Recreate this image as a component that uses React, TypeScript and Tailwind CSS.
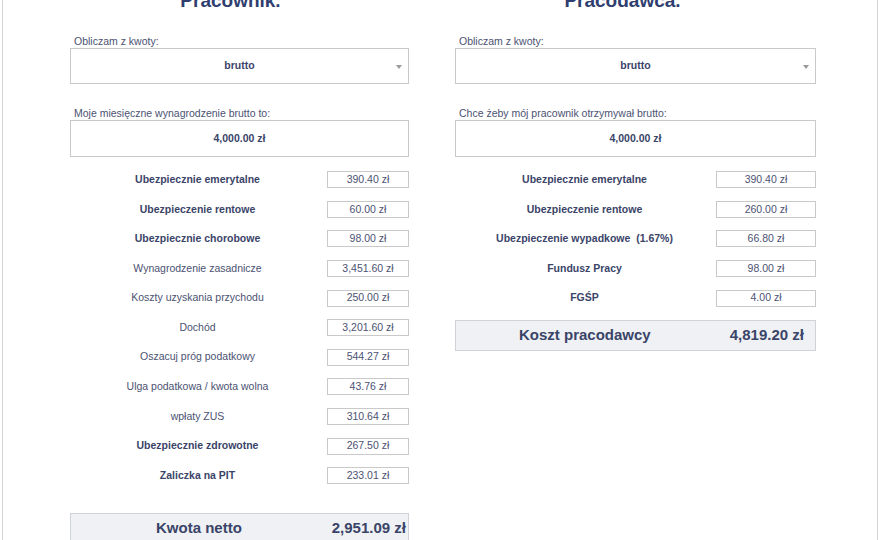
const font = { fontFamily: '"Liberation Sans", Arial, sans-serif' }

type Row = { label: string; value: string; bold?: boolean }

const employeeRows: Row[] = [
  { label: 'Ubezpiecznie emerytalne', value: '390.40 zł', bold: true },
  { label: 'Ubezpieczenie rentowe', value: '60.00 zł', bold: true },
  { label: 'Ubezpiecznie chorobowe', value: '98.00 zł', bold: true },
  { label: 'Wynagrodzenie zasadnicze', value: '3,451.60 zł' },
  { label: 'Koszty uzyskania przychodu', value: '250.00 zł' },
  { label: 'Dochód', value: '3,201.60 zł' },
  { label: 'Oszacuj próg podatkowy', value: '544.27 zł' },
  { label: 'Ulga podatkowa / kwota wolna', value: '43.76 zł' },
  { label: 'wpłaty ZUS', value: '310.64 zł' },
  { label: 'Ubezpiecznie zdrowotne', value: '267.50 zł', bold: true },
  { label: 'Zaliczka na PIT', value: '233.01 zł', bold: true },
]

const employerRows: Row[] = [
  { label: 'Ubezpiecznie emerytalne', value: '390.40 zł', bold: true },
  { label: 'Ubezpieczenie rentowe', value: '260.00 zł', bold: true },
  { label: 'Ubezpieczenie wypadkowe  (1.67%)', value: '66.80 zł', bold: true },
  { label: 'Fundusz Pracy', value: '98.00 zł', bold: true },
  { label: 'FGŚP', value: '4.00 zł', bold: true },
]

function SelectBox() {
  return (
    <div className="relative h-[36px] border border-[#c9c9c9] bg-white flex items-center justify-center">
      <span className="text-[10.5px] font-bold text-[#3a4468]">brutto</span>
      <span className="absolute right-[6px] top-[16px] w-0 h-0 border-l-[3px] border-r-[3px] border-t-[4px] border-l-transparent border-r-transparent border-t-[#9a9a9a]" />
    </div>
  )
}

function Rows({ rows, valueWidth }: { rows: Row[]; valueWidth: string }) {
  return (
    <div className="flex flex-col">
      {rows.map((r) => (
        <div key={r.label} className="h-[29.6px] flex items-center">
          <div
            className={`flex-1 text-center text-[10.5px] whitespace-pre ${
              r.bold ? 'font-bold text-[#3a4468]' : 'text-[#4b5272]'
            }`}
          >
            {r.label}
          </div>
          <div
            className={`${valueWidth} h-[17px] ml-[2px] border border-[#c9c9c9] bg-white flex items-center justify-center text-[10.5px] text-[#4b5272]`}
          >
            {r.value}
          </div>
        </div>
      ))}
    </div>
  )
}

function Column({
  title,
  titlePad,
  amountLabel,
  rows,
  valueWidth,
  summaryLabel,
  summaryValue,
  summaryGap,
  summaryLabelPad,
  summaryValuePad,
  width,
}: {
  title: string
  titlePad: string
  amountLabel: string
  rows: Row[]
  valueWidth: string
  summaryLabel: string
  summaryValue: string
  summaryGap: string
  summaryLabelPad: string
  summaryValuePad: string
  width: string
}) {
  return (
    <div className={`${width} self-start flex flex-col`}>
      <h1
        className={`mt-[-12px] h-[26px] leading-[26px] text-center text-[19px] font-bold text-[#2f3e6e] ${titlePad}`}
      >
        {title}
      </h1>
      <p className="mt-[20px] pl-[4px] h-[14px] leading-[14px] text-[10.5px] text-[#4b5272]">Obliczam z kwoty:</p>
      <SelectBox />
      <p className="mt-[22px] pl-[4px] h-[14px] leading-[14px] text-[10.5px] text-[#4b5272]">{amountLabel}</p>
      <div className="h-[37px] border border-[#c9c9c9] bg-white flex items-center justify-center">
        <span className="text-[10.5px] font-bold text-[#3a4468]">4,000.00 zł</span>
      </div>
      <div className="mt-[8px]">
        <Rows rows={rows} valueWidth={valueWidth} />
      </div>
      <div
        className={`${summaryGap} h-[31px] border border-[#cfd2d6] bg-[#eff1f4] flex items-center text-[15px] font-bold text-[#3a4468]`}
      >
        <span className={summaryLabelPad}>{summaryLabel}</span>
        <span className={`ml-auto ${summaryValuePad}`}>{summaryValue}</span>
      </div>
    </div>
  )
}

export default function App() {
  return (
    <div style={font} className="w-[880px] h-[540px] overflow-hidden bg-white">
      <div className="ml-[2px] w-[876px] h-[540px] border-l border-r border-[#d4d4d4] flex pl-[67px]">
        <Column
          title="Pracownik."
          titlePad="pr-[18px]"
          amountLabel="Moje miesięczne wynagrodzenie brutto to:"
          rows={employeeRows}
          valueWidth="w-[82px]"
          summaryLabel="Kwota netto"
          summaryValue="2,951.09 zł"
          summaryGap="mt-[22px]"
          summaryLabelPad="pl-[85px]"
          summaryValuePad="pr-[2px]"
          width="w-[339px]"
        />
        <div className="w-[46px]" />
        <Column
          title="Pracodawca."
          titlePad="pr-[26px]"
          amountLabel="Chce żeby mój pracownik otrzymywał brutto:"
          rows={employerRows}
          valueWidth="w-[100px]"
          summaryLabel="Koszt pracodawcy"
          summaryValue="4,819.20 zł"
          summaryGap="mt-[7px]"
          summaryLabelPad="pl-[63px]"
          summaryValuePad="pr-[11px]"
          width="w-[361px]"
        />
      </div>
    </div>
  )
}
